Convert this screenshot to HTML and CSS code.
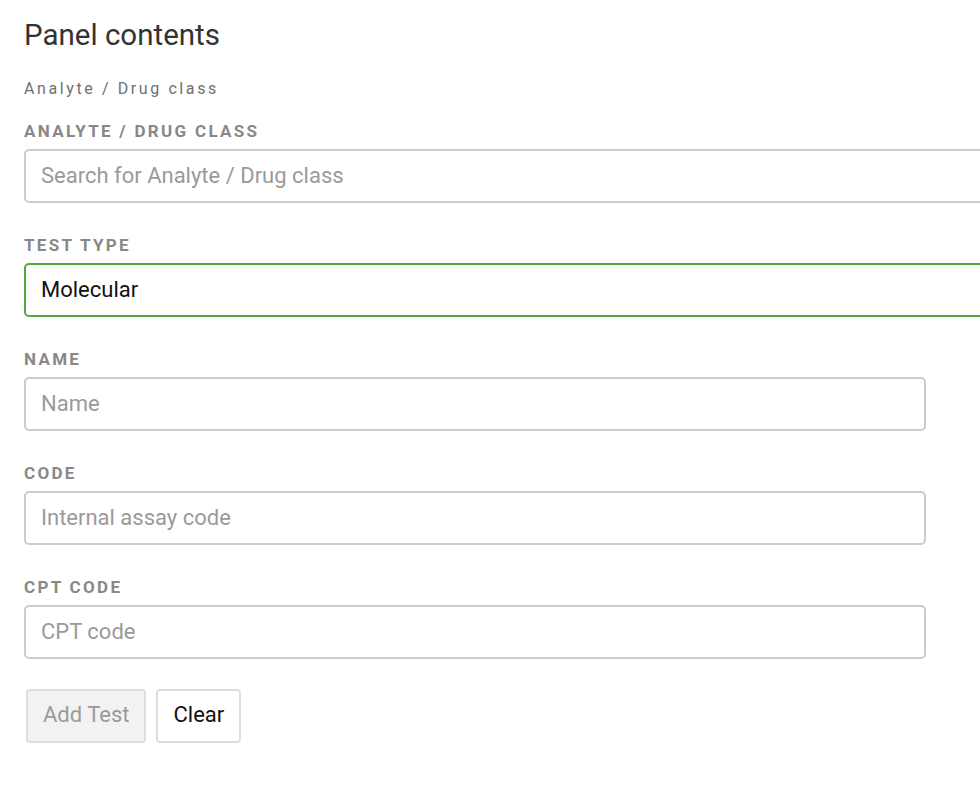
FILE: index.html
```html
<!DOCTYPE html>
<html>
<head>
<meta charset="utf-8">
<link rel="stylesheet" href="styles.css">
</head>
<body>
<div class="panel">
  <h2 class="title">Panel contents</h2>
  <div class="subtitle">Analyte / Drug class</div>
  <div class="field first">
    <label class="label">ANALYTE / DRUG CLASS</label>
    <div class="input wide placeholder">Search for Analyte / Drug class</div>
  </div>
  <div class="field">
    <label class="label">TEST TYPE</label>
    <div class="input wide active">Molecular</div>
  </div>
  <div class="field">
    <label class="label">NAME</label>
    <div class="input placeholder">Name</div>
  </div>
  <div class="field">
    <label class="label">CODE</label>
    <div class="input placeholder">Internal assay code</div>
  </div>
  <div class="field">
    <label class="label">CPT CODE</label>
    <div class="input placeholder">CPT code</div>
  </div>
  <div class="actions">
    <button class="btn disabled">Add Test</button>
    <button class="btn">Clear</button>
  </div>
</div>
</body>
</html>
```

FILE: styles.css
```css
html, body {
  margin: 0;
  padding: 0;
  background: #ffffff;
  overflow: hidden;
}
body {
  font-family: Roboto, "Liberation Sans", Arial, sans-serif;
}
.panel {
  padding: 18px 0 0 24px;
  width: 1100px;
}
.title {
  margin: 0;
  font-size: 29.5px;
  font-weight: 400;
  line-height: 34px;
  color: #333333;
}
.subtitle {
  margin-top: 27px;
  font-size: 16px;
  line-height: 20px;
  letter-spacing: 2.6px;
  color: #707070;
}
.field {
  margin-top: 32px;
}
.field.first {
  margin-top: 22px;
}
.label {
  display: block;
  font-size: 17px;
  font-weight: 700;
  line-height: 20px;
  letter-spacing: 2.3px;
  color: #888888;
  margin-bottom: 8px;
}
.input {
  box-sizing: border-box;
  width: 902px;
  height: 54px;
  border: 2px solid #cccccc;
  border-radius: 5px;
  padding: 0 15px 2px;
  display: flex;
  align-items: center;
  font-size: 22px;
  color: #111111;
}
.input.wide {
  width: 1000px;
}
.input.placeholder {
  color: #9a9a9a;
}
.input.active {
  border-color: #52a93c;
}
.actions {
  margin-top: 30px;
  margin-left: 2px;
  display: flex;
  gap: 10px;
}
.btn {
  box-sizing: border-box;
  height: 54px;
  padding: 0 15px 3px;
  border: 2px solid #dddddd;
  border-radius: 4px;
  background: #ffffff;
  font-family: Roboto, "Liberation Sans", Arial, sans-serif;
  font-size: 22px;
  color: #111111;
}
.btn.disabled {
  background: #f2f2f2;
  color: #9a9a9a;
}
```
